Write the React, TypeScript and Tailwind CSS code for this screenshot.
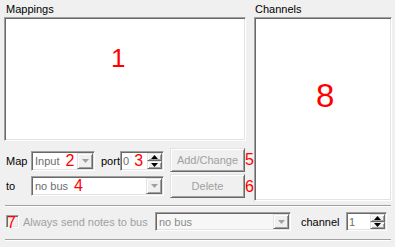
import React from "react";

const sunken =
  "border border-t-[#a0a0a0] border-l-[#a0a0a0] border-b-white border-r-white shadow-[inset_1px_1px_0_#696969,inset_-1px_-1px_0_#e3e3e3]";
const raised =
  "border border-t-[#e3e3e3] border-l-[#e3e3e3] border-b-[#696969] border-r-[#696969] shadow-[inset_1px_1px_0_#ffffff,inset_-1px_-1px_0_#a0a0a0] bg-[#f0f0f0]";

function Arrow({ up, color }: { up?: boolean; color: string }) {
  return (
    <svg width="7" height="4" viewBox="0 0 7 4">
      {up ? (
        <polygon points="0,4 7,4 3.5,0" fill={color} />
      ) : (
        <polygon points="0,0 7,0 3.5,4" fill={color} />
      )}
    </svg>
  );
}

function Combo({
  width,
  text,
  tag,
  bg = "bg-white",
  textColor = "text-[#6d6d6d]",
}: {
  width: string;
  text: string;
  tag?: string;
  bg?: string;
  textColor?: string;
}) {
  return (
    <div className={`${width} h-full ${sunken} ${bg} flex items-stretch p-[1px]`}>
      <div className={`flex-1 flex items-center pl-[2px] ${textColor} whitespace-nowrap overflow-hidden`}>
        <span>{text}</span>
        {tag && (
          <span className="ml-[6px] text-[#ff0000] text-[16px] leading-none">{tag}</span>
        )}
      </div>
      <div className={`w-[16px] ${raised} flex items-center justify-center`}>
        <Arrow color="#a0a0a0" />
      </div>
    </div>
  );
}

function Spin({
  width,
  value,
  tag,
}: {
  width: string;
  value: string;
  tag?: string;
}) {
  return (
    <div className={`${width} h-full ${sunken} bg-white flex items-stretch p-[1px]`}>
      <div className="flex-1 flex items-center pl-[1px] text-[#6d6d6d]">
        <span>{value}</span>
        {tag && (
          <span className="ml-[5px] text-[#ff0000] text-[16px] leading-none">{tag}</span>
        )}
      </div>
      <div className="w-[15px] flex flex-col">
        <div className={`flex-1 ${raised} flex items-center justify-center`}>
          <Arrow up color="#000" />
        </div>
        <div className={`flex-1 ${raised} flex items-center justify-center`}>
          <Arrow color="#000" />
        </div>
      </div>
    </div>
  );
}

function Button({ label }: { label: string }) {
  return (
    <div
      className={`w-[75px] h-[24px] ${raised} flex items-center justify-center text-[#a0a0a0]`}
    >
      {label}
    </div>
  );
}

export default function App() {
  return (
    <div className="relative w-[395px] h-[247px] overflow-hidden bg-[#f0f0f0] text-[11px] leading-[14px] text-black font-['Liberation_Sans',Arial,sans-serif]">
      {/* top area */}
      <div className="flex pl-[4px] pt-[2px]">
        <div className="w-[242px] flex flex-col">
          <div className="h-[14px] pl-[2px] mb-[1px]">Mappings</div>
          <div className={`relative h-[124px] ${sunken} bg-white`}>
            <span className="absolute left-[106px] top-[27px] text-[26px] leading-none text-[#ff0000]">
              1
            </span>
          </div>
          <div className="mt-[7px] flex">
            <div className="w-[166px] pl-[2px] pt-[3px] flex flex-col">
              <div className="h-[20px] flex items-center">
                <span className="w-[25px]">Map</span>
                <Combo width="w-[64px]" text="Input" tag="2" />
                <span className="ml-[6px] w-[19px]">port</span>
                <Spin width="w-[44px]" value="0" tag="3" />
              </div>
              <div className="h-[20px] mt-[5px] flex items-center">
                <span className="w-[25px]">to</span>
                <Combo width="w-[133px]" text="no bus" tag="4" />
              </div>
            </div>
            <div className="relative flex flex-col gap-[2px]">
              <Button label="Add/Change" />
              <Button label="Delete" />
              <span className="absolute left-[75px] top-[4px] text-[16px] leading-none text-[#ff0000]">
                5
              </span>
              <span className="absolute left-[75px] top-[31px] text-[16px] leading-none text-[#ff0000]">
                6
              </span>
            </div>
          </div>
        </div>
        <div className="ml-[8px] w-[138px] flex flex-col">
          <div className="h-[14px] pl-[1px] mb-[1px]">Channels</div>
          <div className={`relative h-[184px] ${sunken} bg-white`}>
            <span className="absolute left-[61px] top-[61px] text-[33px] leading-none text-[#ff0000]">
              8
            </span>
          </div>
        </div>
      </div>

      {/* separator */}
      <div className="mt-[4px] ml-[5px] w-[386px] h-[2px] border-t border-t-[#a0a0a0] border-b border-b-white" />

      {/* bottom row */}
      <div className="mt-[5px] h-[19px] flex items-center pl-[6px]">
        <div className={`relative w-[13px] h-[13px] ${sunken} bg-[#f0f0f0]`}>
          <span className="absolute left-[0px] top-[-1px] text-[16px] leading-none text-[#ff0000]">
            7
          </span>
        </div>
        <span className="ml-[4px] w-[132px] text-[#a0a0a0] whitespace-nowrap">
          Always send notes to bus
        </span>
        <Combo width="w-[136px]" text="no bus" bg="bg-[#f7f7f7]" textColor="text-[#8a8a8a]" />
        <span className="ml-[10px] w-[45px]">channel</span>
        <Spin width="w-[41px]" value="1" />
      </div>

      {/* separator */}
      <div className="mt-[8px] ml-[5px] w-[386px] h-[2px] border-t border-t-[#a0a0a0] border-b border-b-white" />
    </div>
  );
}
